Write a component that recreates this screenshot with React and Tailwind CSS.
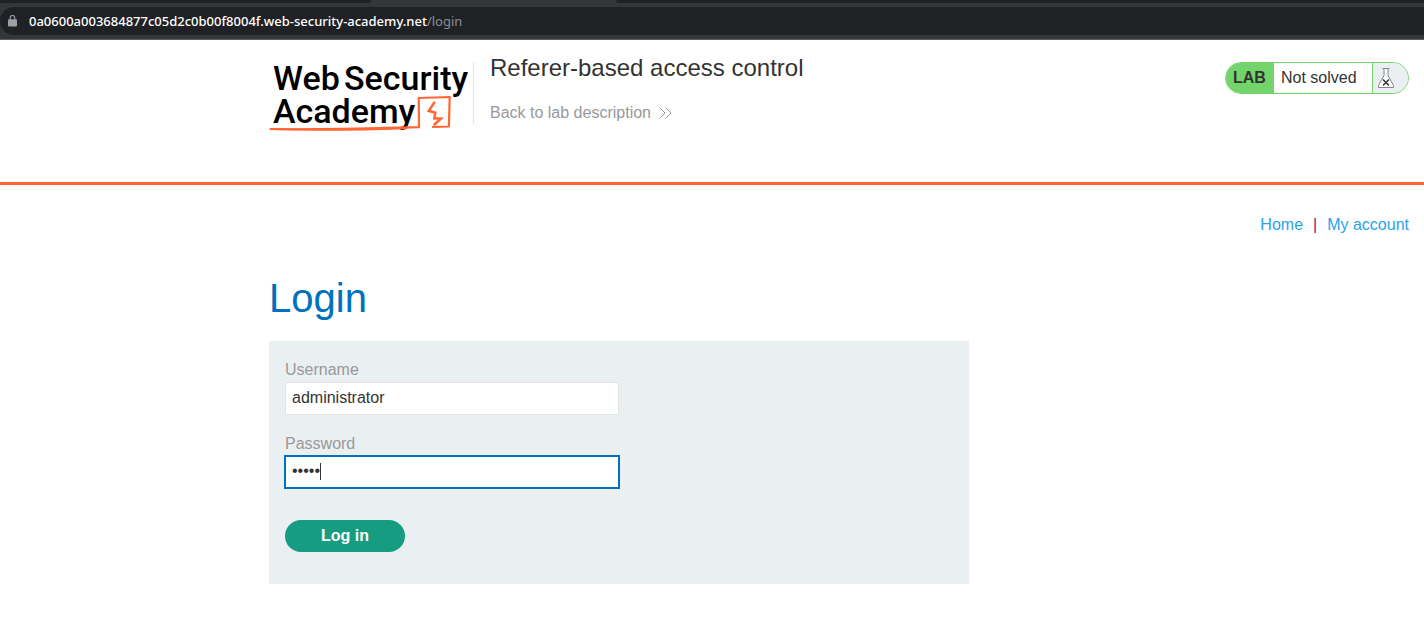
import { useEffect, useRef } from "react";

function BrowserBar() {
  return (
    <div className="flex h-10 flex-col border-b border-[#5a5b5f] bg-[#35363a]">
      <div className="flex h-[3px] justify-between">
        <div className="w-[371px] shrink-0 rounded-br-lg bg-[#202124]" />
        <div className="w-[245px] shrink-0" />
        <div className="grow rounded-bl-lg bg-[#202124]" />
      </div>
      <div className="mt-1 flex h-7 items-center gap-3 rounded-l-full bg-[#202124] pl-2">
        <svg className="h-3 w-[9px] shrink-0" viewBox="0 0 9 12" aria-hidden="true">
          <rect x="0" y="4.2" width="9" height="7.3" rx="1" fill="#9aa0a6" />
          <path d="M2.2 5V2.8a2.3 2.3 0 0 1 4.6 0V5" fill="none" stroke="#9aa0a6" strokeWidth="1.1" />
        </svg>
        <span className="font-['Noto_Sans',sans-serif] text-[13px] leading-5 font-medium text-white">
          0a0600a003684877c05d2c0b00f8004f.web-security-academy.net
          <span className="font-normal text-[#8b8f94]">/login</span>
        </span>
      </div>
    </div>
  );
}

function Logo() {
  return (
    <svg className="h-[72px] w-[200px] overflow-visible" viewBox="0 0 200 72" role="img" aria-label="Web Security Academy">
      <g fill="#000" fontFamily="Roboto, sans-serif" fontSize="34" fontWeight="500">
        <text x="4" y="28">Web</text>
        <text x="75" y="28">Security</text>
        <text x="4" y="61">Academy</text>
      </g>
      <g fill="none" stroke="#ff6633" strokeLinejoin="round" strokeLinecap="round">
        <path d="M1.5 67c45 1 94-.5 148.500-1.800L149.700 36l31-1-.8 29.500-16 .4" strokeWidth="2.200" />
        <path d="M3 67q60 1.800 134-.8" strokeWidth="2.200" />
        <path d="M165.300 40.500l-5.500 8.500 6.500 1.700-1 5.500 6.700.3-6.500 6" strokeWidth="2.500" strokeLinejoin="miter" />
      </g>
    </svg>
  );
}

function LabStatus() {
  return (
    <div className="flex h-8 w-[184px] overflow-hidden rounded-full border border-[#73d46c] text-base leading-[30px] text-[#333332]">
      <span className="w-12 bg-[#73d46c] pl-[7px] font-bold">LAB</span>
      <span className="grow border-r border-[#73d46c] pl-[7px]">Not solved</span>
      <span className="flex w-[35px] items-center bg-[#eaeff2] pl-[5px]">
        <svg className="h-5 w-4" viewBox="0 0 16 20" fill="none" aria-hidden="true">
          <path d="M4.500.5h7M6 .5v7L.5 17.500v2h15v-2L10 7.500v-7" fill="#fff" stroke="#858585" />
          <path d="M5 11.500l6 6M11 11.500l-6 6" stroke="#333332" strokeWidth="1.500" />
        </svg>
      </span>
    </div>
  );
}

function LoginForm() {
  const password = useRef(null);

  useEffect(() => {
    const field = password.current;
    field.focus();
    field.setSelectionRange(field.value.length, field.value.length);
  }, []);

  return (
    <form
      className="flex w-full max-w-[700px] flex-col items-start bg-[#eaeff2] px-4 pt-4 pb-8 text-base"
      onSubmit={(event) => event.preventDefault()}
    >
      <label htmlFor="username" className="leading-[25px] text-[#999]">Username</label>
      <input
        id="username"
        type="text"
        defaultValue="administrator"
        className="h-[33px] w-1/2 border border-[#e4e4e4] bg-white px-1.5 pb-0.5 text-[#333332] outline-none"
      />
      <label htmlFor="password" className="mt-4 leading-[25px] text-[#999]">Password</label>
      <div className="relative w-1/2">
        <input
          id="password"
          type="password"
          ref={password}
          defaultValue="peter"
          className="block h-8 w-full border border-white bg-white px-1.5 pb-0.5 text-[#333332] caret-transparent outline-2 -outline-offset-1 outline-[#0071bc]"
        />
        <span className="absolute top-[7px] left-[35px] h-[17px] w-px bg-[#333332]" />
      </div>
      <button type="submit" className="mt-8 h-8 w-[120px] rounded-full bg-[#169c80] pb-px font-bold text-white">
        Log in
      </button>
    </form>
  );
}

export default function App() {
  return (
    <div className="bg-white font-['Liberation_Sans',Arial,sans-serif]">
      <BrowserBar />
      <header className="flex h-[145px] items-start border-b-3 border-[#ff6633] pt-[22px] pr-[15px] pl-[269px]">
        <a href="#academy" className="shrink-0">
          <Logo />
        </a>
        <div className="ml-1 flex h-[62px] grow flex-col gap-4 border-l border-[#e4e4e4] pl-4">
          <h2 className="-mt-2 text-2xl leading-7 text-[#333332]">Referer-based access control</h2>
          <a href="#description" className="flex items-center gap-2 text-base leading-[30px] text-[#999]">
            Back to lab description
            <svg className="h-3 w-[13px]" viewBox="0 0 13 12" fill="none" stroke="#999" aria-hidden="true">
              <path d="M.500.500L6 6l-5.500 5.500M6.500 .500L12 6l-5.500 5.500" />
            </svg>
          </a>
        </div>
        <LabStatus />
      </header>
      <main className="pr-[15px] pl-[269px]">
        <nav className="flex justify-end gap-2.5 pt-7 text-base text-[#29a4e3]">
          <a href="#home">Home</a>
          <span className="text-[#7a1f5c]">|</span>
          <a href="#account">My account</a>
        </nav>
        <h1 className="mt-9 mb-[17px] text-[40px] leading-[51px] text-[#0071bc]">Login</h1>
        <LoginForm />
      </main>
    </div>
  );
}
